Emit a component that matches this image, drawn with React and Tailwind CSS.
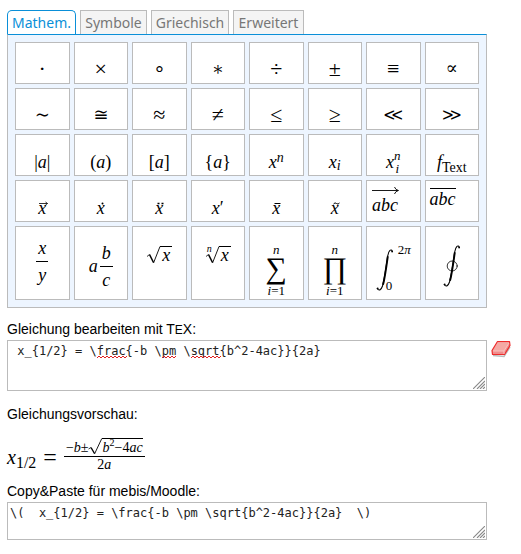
import React, { useState } from "react";
import clsx from "clsx";

const TABS = [
  { name: "Mathem.", width: "w-[69px]" },
  { name: "Symbole", width: "w-[67px]" },
  { name: "Griechisch", width: "w-[78px]" },
  { name: "Erweitert", width: "w-[71px]" },
];

const OPERATORS = ["·", "×", "∘", "∗", "÷", "±", "≡", "∝", "∼", "≅", "≈", "≠", "≤", "≥", "≪", "≫"];

// Operators that Liberation Serif lacks come from the maths font, which runs larger.
const MATH_FONT = ["∘", "∝", "∼", "≅", "≪", "≫"];

const Var = ({ children }) => <i className="italic">{children}</i>;

const Script = ({ children, className }) => (
  <span className={clsx("relative text-[14px] leading-none", className)}>{children}</span>
);

function Fraction({ top, bottom }) {
  return (
    <span className="flex flex-col items-center gap-[3px]">
      <span className="px-0.5 leading-5">{top}</span>
      <span className="h-px w-full min-w-3 bg-black" />
      <span className="px-0.5 leading-5">{bottom}</span>
    </span>
  );
}

function Accent({ mark }) {
  return (
    <span className="relative">
      <Var>x</Var>
      <svg className="absolute top-0.5 left-0 h-2 w-2.5" viewBox="0 0 10 8" fill="none" stroke="#000">
        {mark}
      </svg>
    </span>
  );
}

function Root({ index }) {
  return (
    <span className="relative flex w-[26px] justify-end pr-0.5 leading-5">
      {index && <span className="absolute top-0 left-0.5 text-[10px] leading-2 italic">n</span>}
      <svg className="absolute top-0 left-0 h-5 w-[26px]" viewBox="0 0 26 20" fill="none" stroke="#000">
        <path d="M1 11.5 L3.5 9.5" strokeWidth="0.8" />
        <path d="M3.5 9.5 L7.5 17.5" strokeWidth="1.5" />
        <path d="M7.5 18 L14 1.5" strokeWidth="0.9" />
        <path d="M14 1.5 H26" />
      </svg>
      <Var>x</Var>
    </span>
  );
}

function BigOperator({ symbol }) {
  return (
    <span className="flex flex-col items-center">
      <span className="text-[13px] leading-3 italic">n</span>
      <span className="text-[30px] leading-6">{symbol}</span>
      <span className="mt-[3px] text-[13px] leading-4">
        <Var>i</Var>=1
      </span>
    </span>
  );
}

function Integral({ closed }) {
  return (
    <svg className="h-11 w-[18px]" viewBox="0 0 18 44" fill="none" stroke="#000" strokeLinecap="round">
      <path d="M16.5 3.5 C15 0.5 12.8 2 11.7 8 C10.5 16 8.5 31 6.5 38 C5 42.5 2.8 43 1.2 40.5" strokeWidth="1.1" />
      <path d="M11.7 9 C10.7 16 9 29 7.2 36" strokeWidth="1.9" />
      <circle cx="16.1" cy="3.6" r="0.9" fill="#000" stroke="none" />
      <circle cx="1.7" cy="40.4" r="0.9" fill="#000" stroke="none" />
      {closed && <circle cx="9.2" cy="22" r="5" strokeWidth="0.8" />}
    </svg>
  );
}

const BRACKETED = [
  <>|<Var>a</Var>|</>,
  <>(<Var>a</Var>)</>,
  <>[<Var>a</Var>]</>,
  <>{"{"}<Var>a</Var>{"}"}</>,
  <><Var>x</Var><Script className="-top-1.5 italic">n</Script></>,
  <><Var>x</Var><Script className="top-0.5 italic">i</Script></>,
  <span className="flex">
    <Var>x</Var>
    <span className="-mt-[3px] flex flex-col text-[13px] leading-[13px] italic">
      <span>n</span>
      <span>i</span>
    </span>
  </span>,
  <><Var>f</Var><Script className="top-1">Text</Script></>,
];

const ACCENTS = [
  <Accent mark={<path d="M1 3.5 H9.5 M7.5 2 L9.5 3.5 L7.5 5" strokeWidth="0.8" />} />,
  <Accent mark={<circle cx="5.5" cy="3.5" r="1" fill="#000" stroke="none" />} />,
  <Accent mark={<path d="M2.5 3.5 h2 M6.5 3.5 h2" strokeWidth="1.6" />} />,
  <><Var>x</Var>′</>,
  <Accent mark={<path d="M2.5 3.5 H8.5" />} />,
  <Accent mark={<path d="M2.5 4 Q4 2 5.5 3.5 T8.5 3" />} />,
];

const cell = "flex justify-center border border-[#bbb] bg-white leading-5 whitespace-nowrap";

function Palette() {
  return (
    <div className="grid grid-cols-8 gap-1 border border-[#bbb] border-t-[#0a8fd8] bg-[#edf5ff] p-[7px] font-['Liberation_Serif','DejaVu_Serif',serif] text-[18px] text-black">
      {OPERATORS.map((symbol) => (
        <button
          key={symbol}
          type="button"
          className={clsx(
            cell,
            "h-[42px] pt-4",
            MATH_FONT.includes(symbol) && "font-['DejaVu_Math_TeX_Gyre',serif] text-[18px]",
            symbol === "∗" && "font-['DejaVu_Math_TeX_Gyre',serif] text-[14px]",
            symbol !== "∗" && !MATH_FONT.includes(symbol) && "text-[22px]"
          )}
        >
          {symbol}
        </button>
      ))}
      {BRACKETED.map((body, i) => (
        <button key={i} type="button" className={clsx(cell, "h-[42px] pt-[17px]")}>
          <span>{body}</span>
        </button>
      ))}
      {ACCENTS.map((body, i) => (
        <button key={i} type="button" className={clsx(cell, "h-[42px] pt-[17px]")}>
          <span>{body}</span>
        </button>
      ))}
      <button type="button" className={clsx(cell, "h-[42px] flex-col items-start! justify-start! pt-1.5 pl-[5px]")}>
        <svg className="h-2 w-[27px]" viewBox="0 0 27 8" fill="none" stroke="#000">
          <path d="M0 3.5 H26" strokeWidth="0.9" />
          <path d="M22.5 0 Q23.5 3 26.5 3.5 Q23.5 4 22.5 7" strokeWidth="0.9" />
        </svg>
        <span className="italic">abc</span>
      </button>
      <button type="button" className={clsx(cell, "h-[42px] justify-start! pt-[7px] pl-1")}>
        <span className="border-t border-black leading-5 italic">abc</span>
      </button>
      <button type="button" className={clsx(cell, "h-[74px] pt-[11px]")}>
        <Fraction top={<Var>x</Var>} bottom={<Var>y</Var>} />
      </button>
      <button type="button" className={clsx(cell, "h-[74px] items-start gap-0.5 pt-4")}>
        <span className="pt-[13px]"><Var>a</Var></span>
        <Fraction top={<Var>b</Var>} bottom={<Var>c</Var>} />
      </button>
      <button type="button" className={clsx(cell, "h-[74px] pt-[18px]")}><Root /></button>
      <button type="button" className={clsx(cell, "h-[74px] pt-[18px]")}><Root index /></button>
      <button type="button" className={clsx(cell, "h-[74px] pt-[17px]")}><BigOperator symbol="∑" /></button>
      <button type="button" className={clsx(cell, "h-[74px] pt-[17px]")}><BigOperator symbol="∏" /></button>
      <button type="button" className={clsx(cell, "h-[74px] gap-1 pt-[21px]")}>
        <Integral />
        <span className="-mt-1 flex h-12 flex-col justify-between text-left text-[13px] leading-3">
          <span>2<Var>π</Var></span>
          <span className="-ml-3">0</span>
        </span>
      </button>
      <button type="button" className={clsx(cell, "h-[74px] pt-[17px]")}><Integral closed /></button>
    </div>
  );
}

const Grip = () => (
  <svg className="pointer-events-none absolute right-0.5 bottom-0.5 size-3" viewBox="0 0 12 12" stroke="#888" strokeWidth="1.1">
    <path d="M0 12 L12 0 M4 12 L12 4 M7 12 L12 7 M10 12 L12 10" />
  </svg>
);

const zigzag = (x) => <path key={x} d={`M${x} 4 l2 -2 l2 2 l2 -2 l2 2 l2 -2 l2 2 l2 -2`} />;

const Squiggles = () => (
  <svg className="pointer-events-none absolute top-3.5 left-0 h-1.5 w-[230px]" viewBox="0 0 230 6" fill="none" stroke="#e02020">
    {[90, 98, 106, 155, 184, 192, 200].map(zigzag)}
  </svg>
);

const Eraser = () => (
  <svg className="h-[18px] w-5" viewBox="0 0 20 18">
    <path d="M2 15.5 L13 16.5 L19 7" fill="none" stroke="#bbb" strokeWidth="1.5" />
    <path d="M6.5 1.5 H18.5 L19 5.5 L13.5 14.5 H1.5 L1 10.5 Z" fill="#f08c8c" stroke="#ee2c2c" strokeWidth="1.2" strokeLinejoin="round" />
    <path d="M6.8 2.2 H18 L13 10.8 H2 Z" fill="#f4a9a4" />
    <path d="M2 11 H13 L18 3 M13 11 V14" fill="none" stroke="#fbd0cc" strokeWidth="0.8" />
  </svg>
);

const area = "block w-full resize-none border border-[#bbb] bg-white px-0.5 py-0.5 font-['DejaVu_Sans_Mono',monospace] text-[12px] leading-4 text-[#222] outline-none";

export default function App() {
  const [active, setActive] = useState("Mathem.");
  const [tex, setTex] = useState(" x_{1/2} = \\frac{-b \\pm \\sqrt{b^2-4ac}}{2a}");

  return (
    <main className="bg-white pt-2.5 pr-[34px] pb-3.5 pl-[7px] font-['Liberation_Sans',Arial,sans-serif] text-[14px] leading-5 text-black">
      <nav className="flex gap-1 font-['Noto_Sans',sans-serif]">
        {TABS.map(({ name, width }) => (
          <button
            key={name}
            type="button"
            onClick={() => setActive(name)}
            className={clsx(
              "h-6 border border-b-0 text-center leading-6",
              width,
              name === active ? "rounded-t-[5px] border-[#0a8fd8] bg-white text-[#0a8fd8]" : "border-[#bbb] bg-[#f4f4f4] text-[#777]"
            )}
          >
            {name}
          </button>
        ))}
      </nav>

      <Palette />

      <label htmlFor="tex" className="mt-[11px] block">
        Gleichung bearbeiten mit T<span className="text-[12px]">E</span>X:
      </label>
      <div className="relative">
        <textarea id="tex" spellCheck={false} value={tex} onChange={(e) => setTex(e.target.value)} className={clsx(area, "h-[51px]")} />
        <Squiggles />
        <Grip />
        <button type="button" aria-label="Löschen" className="absolute top-0 left-full ml-1">
          <Eraser />
        </button>
      </div>

      <p className="mt-[13px]">Gleichungsvorschau:</p>
      <div className="mt-3.5 flex h-[34px] items-center font-['Liberation_Serif',serif] text-[20px]">
        <span className="pt-1">
          <Var>x</Var><span className="relative top-1 text-[16px] leading-none">1/2</span>
        </span>
        <span className="px-[7px] pt-1 text-[24px]">=</span>
        <span className="flex flex-col items-center text-[14px]">
          <span className="flex items-end px-0.5 leading-[17px]">
            −<Var>b</Var>±
            <svg className="h-[18px] w-3.5" viewBox="0 0 14 18" fill="none" stroke="#000">
              <path d="M0.5 11 L3 9.5" strokeWidth="0.8" />
              <path d="M3 9.5 L6.5 15.5" strokeWidth="1.4" />
              <path d="M6.5 16 L13.8 0.5" strokeWidth="0.9" />
            </svg>
            <span className="border-t border-black">
              <Var>b</Var><span className="relative -top-1.5 text-[10px] leading-none">2</span>−4<Var>ac</Var>
            </span>
          </span>
          <span className="h-px w-full bg-black" />
          <span className="leading-4">2<Var>a</Var></span>
        </span>
      </div>

      <label htmlFor="copy" className="mt-[9px] mb-px block">Copy&amp;Paste für mebis/Moodle:</label>
      <div className="relative">
        <textarea id="copy" spellCheck={false} readOnly value={`\\( ${tex}  \\)`} className={clsx(area, "h-[38px]")} />
        <Grip />
      </div>
    </main>
  );
}
